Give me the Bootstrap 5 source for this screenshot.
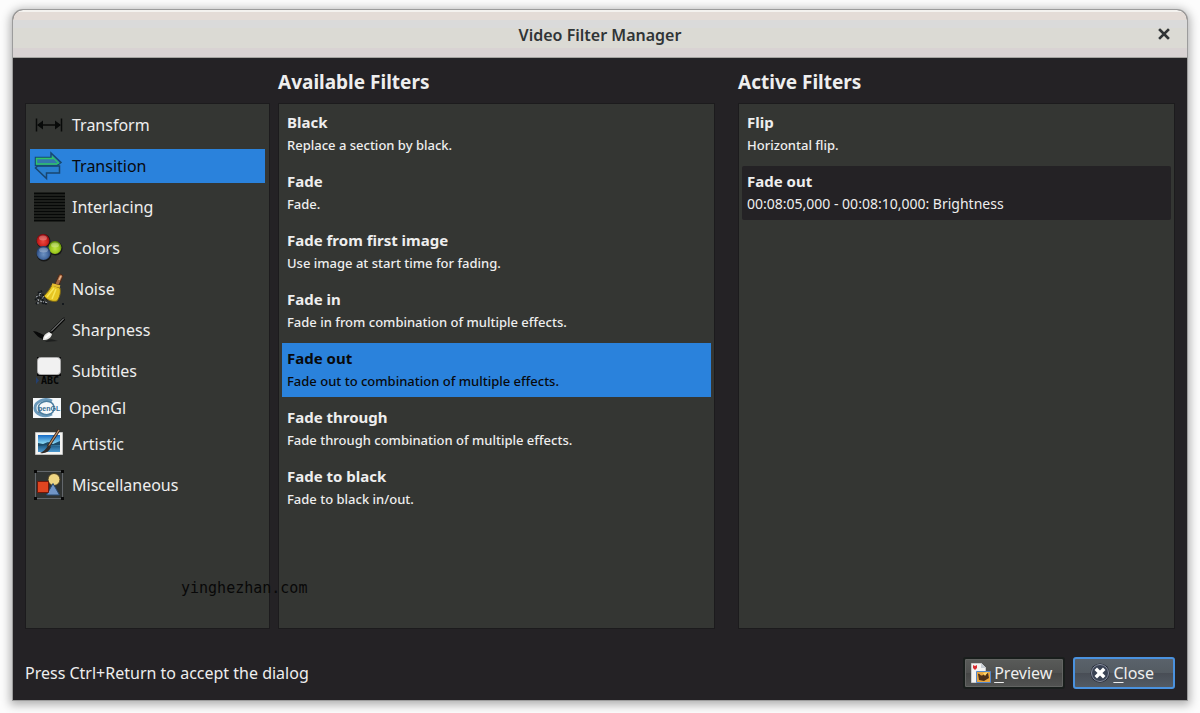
<!DOCTYPE html>
<html lang="en">
<head>
<meta charset="utf-8">
<meta name="viewport" content="width=device-width, initial-scale=1">
<title>Video Filter Manager</title>
<link href="https://cdn.jsdelivr.net/npm/bootstrap@5.3.0/dist/css/bootstrap.min.css" rel="stylesheet">
<style>
body{font-family:"Noto Sans",sans-serif;font-size:16px;line-height:22px;color:#eee;background:#fcfcfc;padding:10px 13px 13px}
.vfm{background:#242225;border-radius:10px 10px 0 0;box-shadow:0 0 0 1px #9c9c9c,0 2px 10px 3px rgba(0,0,0,.3)}
.vfm-title{height:48px;padding-top:2px;border-radius:10px 10px 0 0;border-bottom:1px solid #a4a4a0;color:#303436;
 background:linear-gradient(#f4f2ef 2px,#e4dcd7 2px,#e4dcd7 10px,#dadada 10px,#dadada 18px,#dbdad4 18px,#dbdad4 38px,#d9d3d3 38px)}
.vfm-title h1{font-size:16px;font-weight:600;line-height:22px}
.vfm-x{right:7px;top:8px;width:32px;height:32px;border:0;background:none;padding:0}
.vfm-x svg{display:block;margin:auto}
.vfm-grid{display:grid;grid-template-columns:245px minmax(0,1fr) minmax(0,calc(50% - 123px));grid-template-rows:45px 1fr;column-gap:8px;padding:0 12px}
.vfm-grid h2{font-size:19px;font-weight:700;line-height:26px;margin:11px 0 0}
.vfm-grid .vfm-active{margin-left:15px}
.vfm-panel{background:#343633;border:1px solid #1c1b1d;padding:4px}
.vfm-cats{gap:7px}
.vfm-cat{height:34px;border:0;background:none;color:inherit;text-align:left;padding:0 3px;gap:7px}
.vfm-cat.slim{height:25px;gap:8px}
.vfm-cat.on,.vfm-item.on{background:#2a82dc;color:#08090c}
.vfm-cat svg{flex:none}
.vfm-items{gap:5px;padding:3px}
.vfm-item{height:54px;border:0;background:none;color:inherit;text-align:left;padding:0 5px 2px}
.vfm-item strong{display:block;font-size:15px;font-weight:700;line-height:24px}
.vfm-item span{display:block;font-size:13px;font-weight:500;line-height:22px}
.vfm-item .vfm-range{font-size:14px;font-weight:400}
.vfm-item.pick{background:#242225;border-radius:2px}
.vfm-foot{padding:28px 12px 11px;gap:8px}
.vfm-btn{height:32px;border:2px solid #191e1c;border-radius:3px;color:#eee;padding:0 11px 0 5px;gap:2px;background:linear-gradient(#595b59,#4f504f 50%,#454645 50%,#525352);box-shadow:inset 0 0 0 1px #626462}
.vfm-btn.focus{border:2px solid #4a92df;padding:0 19px 0 15px;gap:3px;background:linear-gradient(#5a626b,#545b62 50%,#484d55 50%,#535b64);box-shadow:none}
.vfm-btn u{text-underline-offset:3px}
.vfm-mark{left:181px;top:577px;font:15px/22px "DejaVu Sans Mono",monospace;color:#080808;pointer-events:none}
</style>
</head>
<body class="min-vh-100 d-flex flex-column position-relative">
<main class="vfm flex-grow-1 d-flex flex-column" role="dialog" aria-labelledby="dlgTitle">
<header class="vfm-title position-relative d-flex align-items-center justify-content-center">
<h1 id="dlgTitle" class="m-0">Video Filter Manager</h1>
<button class="vfm-x position-absolute" type="button" aria-label="Close window"><svg width="12" height="12" viewBox="0 0 12 12"><path d="M2 2l8 8M10 2l-8 8" stroke="#303436" stroke-width="2.6" stroke-linecap="square"/></svg></button>
</header>
<section class="vfm-grid flex-grow-1">
<div></div><h2>Available Filters</h2><h2 class="vfm-active">Active Filters</h2>
<nav class="vfm-panel vfm-cats d-flex flex-column" aria-label="Filter categories">
<button type="button" class="vfm-cat d-flex align-items-center"><svg width="32" height="32" viewBox="0 0 32 32"><path d="M3.500 9.500v13M28.500 9.500v13M5 16h22" stroke="#080a09" stroke-width="1.500"/><path d="M4 16l6-4.500v9zM28 16l-6-4.500v9z" fill="#080a09"/></svg>Transform</button>
<button type="button" class="vfm-cat on d-flex align-items-center"><svg width="32" height="32" viewBox="0 0 32 32"><path d="M26.500 16v7H13.500v5.500L2.500 18l2-2z" fill="#2a80cf" stroke="#19466f" stroke-width="1.500"/><path d="M2.500 7.500h15.500V3l10 9.500-4 3H2.500z" fill="#2b78b8" stroke="#174a72" stroke-width="1.500"/><path d="M3.500 14V8.500h16V7l6 6-2 1z" fill="#3477ad" stroke="#2fc568" stroke-width="1.300"/></svg>Transition</button>
<button type="button" class="vfm-cat d-flex align-items-center"><svg width="32" height="32" viewBox="0 0 32 32"><path d="M1 2.500h31M1 5.500h31M1 8.500h31M1 11.500h31M1 14.500h31M1 17.500h31M1 20.500h31M1 23.500h31M1 26.500h31M1 29.500h31" stroke="#060807" stroke-width="1.800"/></svg>Interlacing</button>
<button type="button" class="vfm-cat d-flex align-items-center"><svg width="32" height="32" viewBox="0 0 32 32"><defs><radialGradient id="r" cy=".6" r=".55"><stop stop-color="#ea4a40"/><stop offset=".6" stop-color="#d02420"/><stop offset="1" stop-color="#8e0d12"/></radialGradient><radialGradient id="g" cy=".6" r=".55"><stop stop-color="#bfe442"/><stop offset=".6" stop-color="#9cc81e"/><stop offset="1" stop-color="#5f8f08"/></radialGradient><radialGradient id="b" cy=".6" r=".55"><stop stop-color="#6d92c2"/><stop offset=".6" stop-color="#476ba2"/><stop offset="1" stop-color="#243f6c"/></radialGradient></defs><g fill="#171818"><circle cx="10.500" cy="9" r="7"/><circle cx="22.500" cy="16.500" r="7"/><circle cx="11" cy="22" r="7.500"/></g><circle cx="10" cy="8.500" r="6.500" fill="url(#r)"/><circle cx="22" cy="15.500" r="6.500" fill="url(#g)"/><circle cx="10.500" cy="21" r="7" fill="url(#b)"/><g fill="#fff" opacity=".28"><ellipse cx="10" cy="6" rx="4" ry="2.500"/><ellipse cx="22" cy="13" rx="4" ry="2.500"/><ellipse cx="10.500" cy="18" rx="4.500" ry="2.500"/></g></svg>Colors</button>
<button type="button" class="vfm-cat d-flex align-items-center"><svg width="32" height="32" viewBox="0 0 32 32"><path d="M2 27l4-3 3 2 3 5M3 31l3-3M8 20l-5 4M9 30l6 1M5 20l4-2M29 31h2M15 27l-6-6" fill="none" stroke="#15191d" stroke-width="2" stroke-dasharray="2 1"/><path d="M3 24l4-2M7 28l4 1M5 26l1 3M11 23l-2 3M4 30h2M6 21l3-1M12 29l3 1" stroke="#a8aeb6" stroke-dasharray="2 1"/><path d="M22 11l4-9 2-1 2 2-4 9z" fill="#a56a43" stroke="#4b2919"/><path d="M26 7l2-4" stroke="#e8b58c" stroke-width="1.500"/><path d="M19 12c-2 4-5 8-8 11 4 5 9 6 13 5 3-4 4-9 3-13z" fill="#e6c522" stroke="#7f6813"/><path d="M14 24l7-9M19 26l4-10" stroke="#f8e556" stroke-width="1.500"/><path d="M19 11.500l8 2" stroke="#e3bb31" stroke-width="2.500"/></svg>Noise</button>
<button type="button" class="vfm-cat d-flex align-items-center"><svg width="32" height="32" viewBox="0 0 32 32"><path d="M0 17c4 0 8 3 11 4l-1 4c-4-1-7-4-10-8z" fill="#080909"/><path d="M15 26c4-2 6 0 10 1l-13 1z" fill="#1d1f1e"/><path d="M18 18L31 5" stroke="#080909" stroke-width="3" stroke-linecap="round"/><path d="M18 17.500L31 4.500" stroke="#a5a7a6"/><path d="M10 26c0-4 2-6 6-8l3 2c-1 4-4 6-9 6z" fill="#e4e4e1"/><path d="M12 24l5-4" stroke="#fff" stroke-width="2"/></svg>Sharpness</button>
<button type="button" class="vfm-cat d-flex align-items-center"><svg width="32" height="32" viewBox="0 0 32 32"><path d="M4 2h24v19H4z" fill="#080808"/><rect x="4.500" y="2.500" width="23" height="17" rx="3" fill="#f1f1f1" stroke="#aaa"/><path d="M3 22l3 3.500L3 29z" fill="#243f6d"/><text x="8" y="29" font-family="DejaVu Sans Mono" font-size="10" font-weight="700" fill="#050606">ABC</text></svg>Subtitles</button>
<button type="button" class="vfm-cat slim d-flex align-items-center"><svg width="28" height="20" viewBox="0 0 28 20"><path fill="#f5f8fa" d="M0 0h28v20H0z"/><path d="M19 3C11-1 2 4 2 10s9 10 17 6" fill="none" stroke="#6b9abb" stroke-width="3"/><path d="M8 5c5-3 13-2 13 5s-8 8-13 5c-4-3-3-8 0-10z" fill="none" stroke="#4c7e9f" stroke-width="1.500"/><text x="5" y="13" font-family="Liberation Sans" font-size="7" font-weight="700" fill="#376c91">penGL</text></svg>OpenGl</button>
<button type="button" class="vfm-cat d-flex align-items-center"><svg width="32" height="32" viewBox="0 0 32 32"><defs><linearGradient id="sky" x2="0" y2="1"><stop stop-color="#1469c4"/><stop offset=".5" stop-color="#8edbf4"/><stop offset=".65" stop-color="#24618b"/><stop offset="1" stop-color="#4d9bd2"/></linearGradient></defs><path fill="#f6f5f2" stroke="#bfc1c0" d="M2.500 4.500h27v22h-27z"/><path fill="url(#sky)" d="M5 7h22v17H5z"/><path d="M5 15l5 1 5-2 5 2 7-3v4l-22 1z" fill="#1c4a68"/><path d="M26 2L15 19" stroke="#36231b" stroke-width="3"/><path d="M26 2L15 19" stroke="#c4946b" stroke-width="1.300"/><path d="M16 17c-3 3-3 5-9 8 5 1 9-1 11-6z" fill="#302b28"/></svg>Artistic</button>
<button type="button" class="vfm-cat d-flex align-items-center"><svg width="32" height="32" viewBox="0 0 32 32"><path d="M2.500 2.500h27v27h-27z" fill="#303332" stroke="#0c0e10"/><path d="M2.500 2.500h27v27h-27z" fill="none" stroke="#b8bec6" stroke-dasharray="1 1"/><path d="M1 1h3v3H1zM28 1h3v3h-3zM1 28h3v3H1zM28 28h3v3h-3z" fill="#080808"/><circle cx="21" cy="10.500" r="6" fill="#eed583" stroke="#4b3d20"/><path d="M20 14.500L26.500 26h-13z" fill="#7195c7" stroke="#28496e"/><path d="M4.500 12.500h11v11h-11z" fill="#df4520" stroke="#6f180b"/></svg>Miscellaneous</button>
</nav>
<div class="vfm-panel vfm-items d-flex flex-column">
<button type="button" class="vfm-item"><strong>Black</strong><span>Replace a section by black.</span></button>
<button type="button" class="vfm-item"><strong>Fade</strong><span>Fade.</span></button>
<button type="button" class="vfm-item"><strong>Fade from first image</strong><span>Use image at start time for fading.</span></button>
<button type="button" class="vfm-item"><strong>Fade in</strong><span>Fade in from combination of multiple effects.</span></button>
<button type="button" class="vfm-item on"><strong>Fade out</strong><span>Fade out to combination of multiple effects.</span></button>
<button type="button" class="vfm-item"><strong>Fade through</strong><span>Fade through combination of multiple effects.</span></button>
<button type="button" class="vfm-item"><strong>Fade to black</strong><span>Fade to black in/out.</span></button>
</div>
<div class="vfm-panel vfm-items vfm-active d-flex flex-column">
<button type="button" class="vfm-item"><strong>Flip</strong><span>Horizontal flip.</span></button>
<button type="button" class="vfm-item pick"><strong>Fade out</strong><span class="vfm-range">00:08:05,000 - 00:08:10,000: Brightness</span></button>
</div>
</section>
<footer class="vfm-foot d-flex align-items-center">
<span class="me-auto">Press Ctrl+Return to accept the dialog</span>
<button type="button" class="vfm-btn d-flex align-items-center"><svg width="22" height="22" viewBox="0 0 22 22"><path d="M1.500 1.500h10l4 4v15h-14z" fill="#f3f3f1" stroke="#c8cacc"/><path d="M11 1v5h5" fill="#c8ced4"/><path d="M3 3l2 1 2-1v3l-2 2-2-2z" fill="#d92c32"/><path d="M6.500 9.500h14v11h-14z" fill="#e7a640" stroke="#5587ca"/><path d="M8 12c2-1 2 3 5 1l5-2 1 5-5 3-5-1z" fill="#4b2e19"/><path d="M13 11l5-1-3 4z" fill="#ffd66a"/></svg><span><u>P</u>review</span></button>
<button type="button" class="vfm-btn focus d-flex align-items-center"><svg width="20" height="20" viewBox="0 0 20 20"><circle cx="10" cy="10" r="9.500" fill="#1c2230"/><circle cx="10" cy="10" r="8.500" fill="#394253" stroke="#8a90a0"/><path d="M7 7l6 6M13 7l-6 6" stroke="#fff" stroke-width="3.500" stroke-linecap="square"/></svg><span><u>C</u>lose</span></button>
</footer>
</main>
<div class="vfm-mark position-absolute">yinghezhan.com</div>
<script src="https://cdn.jsdelivr.net/npm/bootstrap@5.3.0/dist/js/bootstrap.bundle.min.js"></script>
</body>
</html>
